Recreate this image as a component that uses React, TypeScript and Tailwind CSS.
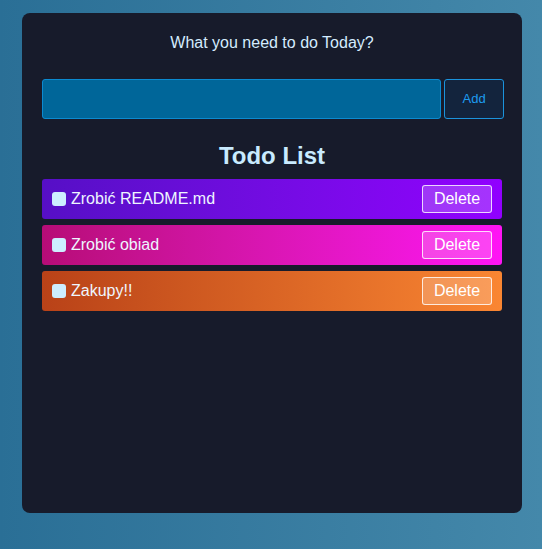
import { useState } from "react";

interface Todo {
    id: number;
    text: string;
    gradient: string;
}

const initialTodos: Todo[] = [
    { id: 1, text: "Zrobić README.md", gradient: "bg-gradient-to-r from-[#560fc6] to-[#9100ff]" },
    { id: 2, text: "Zrobić obiad", gradient: "bg-gradient-to-r from-[#b70c77] to-[#ff14f5]" },
    { id: 3, text: "Zakupy!!", gradient: "bg-gradient-to-r from-[#b94218] to-[#fa8632]" },
];

const App = () => {
    const [todos, setTodos] = useState<Todo[]>(initialTodos);
    const [value, setValue] = useState("");

    const handleAdd = () => {
        if (!value.trim()) {
            return;
        }
        setTodos([...todos, { id: Date.now(), text: value, gradient: initialTodos[todos.length % 3].gradient }]);
        setValue("");
    }

    const handleDelete = (id: number) => {
        setTodos(todos.filter((t) => t.id !== id));
    }

    return (
        <div className="min-h-[549px] w-full bg-gradient-to-r from-[#2a6f96] to-[#4488aa] pt-[13px] pl-[22px] font-['Liberation_Sans',Arial,sans-serif]">
            <div className="w-[500px] h-[500px] bg-[#171b2b] rounded-lg px-5 pt-[20px]">
                <p className="text-center text-[16px] leading-[20px] text-[#d4ecff]">
                    What you need to do Today?
                </p>
                <div className="flex gap-[3px] mt-[26px] w-[462px]">
                    <input
                        value={value}
                        onChange={(e) => setValue(e.target.value)}
                        className="h-10 w-[400px] bg-[#006699] border border-[#0b8ad0] rounded-[3px] outline-none px-2 text-white"
                    />
                    <button
                        onClick={handleAdd}
                        className="h-10 w-[60px] bg-[#13243d] border border-[#1b93dc] rounded-[3px] text-[13px] text-[#1d9cf0]"
                    >
                        Add
                    </button>
                </div>
                <h2 className="text-center text-[24px] leading-[28px] font-bold text-[#c9ebff] mt-[23px]">
                    Todo List
                </h2>
                <div className="flex flex-col gap-[6px] mt-[9px]">
                    {todos.map((todo) => (
                        <div key={todo.id} className={`${todo.gradient} h-10 rounded-[3px] flex items-center pl-[10px] pr-[10px]`}>
                            <span className="w-[14px] h-[14px] rounded-[3px] bg-[#cdeeff] mr-[5px]" />
                            <span className="text-[16px] text-[#eef6ff] flex-1">{todo.text}</span>
                            <button
                                onClick={() => handleDelete(todo.id)}
                                className="h-7 w-[70px] border border-white/80 bg-white/20 rounded-[3px] text-[16px] text-white"
                            >
                                Delete
                            </button>
                        </div>
                    ))}
                </div>
            </div>
        </div>
    );
}

export default App;
